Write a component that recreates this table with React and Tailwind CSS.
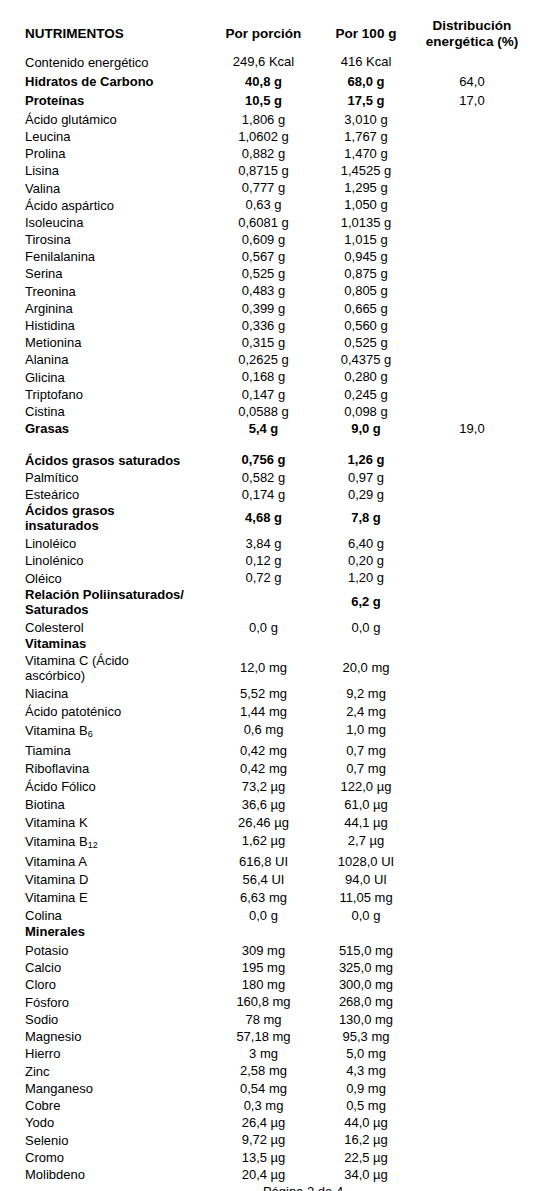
const aminos = [
  ["Ácido glutámico", "1,806 g", "3,010 g"],
  ["Leucina", "1,0602 g", "1,767 g"],
  ["Prolina", "0,882 g", "1,470 g"],
  ["Lisina", "0,8715 g", "1,4525 g"],
  ["Valina", "0,777 g", "1,295 g"],
  ["Ácido aspártico", "0,63 g", "1,050 g"],
  ["Isoleucina", "0,6081 g", "1,0135 g"],
  ["Tirosina", "0,609 g", "1,015 g"],
  ["Fenilalanina", "0,567 g", "0,945 g"],
  ["Serina", "0,525 g", "0,875 g"],
  ["Treonina", "0,483 g", "0,805 g"],
  ["Arginina", "0,399 g", "0,665 g"],
  ["Histidina", "0,336 g", "0,560 g"],
  ["Metionina", "0,315 g", "0,525 g"],
  ["Alanina", "0,2625 g", "0,4375 g"],
  ["Glicina", "0,168 g", "0,280 g"],
  ["Triptofano", "0,147 g", "0,245 g"],
  ["Cistina", "0,0588 g", "0,098 g"],
];

const minerals = [
  ["Potasio", "309 mg", "515,0 mg"],
  ["Calcio", "195 mg", "325,0 mg"],
  ["Cloro", "180 mg", "300,0 mg"],
  ["Fósforo", "160,8 mg", "268,0 mg"],
  ["Sodio", "78 mg", "130,0 mg"],
  ["Magnesio", "57,18 mg", "95,3 mg"],
  ["Hierro", "3 mg", "5,0 mg"],
  ["Zinc", "2,58 mg", "4,3 mg"],
  ["Manganeso", "0,54 mg", "0,9 mg"],
  ["Cobre", "0,3 mg", "0,5 mg"],
  ["Yodo", "26,4 µg", "44,0 µg"],
  ["Selenio", "9,72 µg", "16,2 µg"],
  ["Cromo", "13,5 µg", "22,5 µg"],
  ["Molibdeno", "20,4 µg", "34,0 µg"],
];

function Row({ label, a, b, c, bold, h = "h-[17.2px]" }) {
  return (
    <div className={`grid grid-cols-[188px_101px_104px_108px] items-center ${h} ${bold ? "font-bold" : ""}`}>
      <div className="pr-[26px] leading-[15px]">{label}</div>
      <div className="text-center">{a}</div>
      <div className="text-center">{b}</div>
      <div className="text-center font-normal">{c}</div>
    </div>
  );
}

export default function App() {
  return (
    <div className="bg-white text-black font-['Liberation_Sans',Arial,sans-serif] text-[13px] w-[551px] h-[1191px] overflow-hidden pl-[25px] pt-[16px]">
      <div className="grid grid-cols-[188px_101px_104px_108px] items-center h-[36px] font-bold text-[13.5px]">
        <div>NUTRIMENTOS</div>
        <div className="text-center">Por porción</div>
        <div className="text-center">Por 100 g</div>
        <div className="text-center leading-[15.6px]">
          Distribución
          <br />
          energética (%)
        </div>
      </div>

      <Row label="Contenido energético" a="249,6 Kcal" b="416 Kcal" h="h-[20px]" />
      <Row label="Hidratos de Carbono" a="40,8 g" b="68,0 g" c="64,0" bold h="h-[19px]" />
      <Row label="Proteínas" a="10,5 g" b="17,5 g" c="17,0" bold h="h-[18.5px]" />
      {aminos.map(([l, a, b]) => (
        <Row key={l} label={l} a={a} b={b} />
      ))}
      <Row label="Grasas" a="5,4 g" b="9,0 g" c="19,0" bold h="h-[18px]" />
      <div className="h-[13.6px]" />
      <Row label="Ácidos grasos saturados" a="0,756 g" b="1,26 g" bold />
      <Row label="Palmítico" a="0,582 g" b="0,97 g" />
      <Row label="Esteárico" a="0,174 g" b="0,29 g" />
      <Row label="Ácidos grasos insaturados" a="4,68 g" b="7,8 g" bold h="h-[32px]" />
      <Row label="Linoléico" a="3,84 g" b="6,40 g" />
      <Row label="Linolénico" a="0,12 g" b="0,20 g" />
      <Row label="Oléico" a="0,72 g" b="1,20 g" />
      <Row label="Relación Poliinsaturados/ Saturados" b="6,2 g" bold h="h-[32px]" />
      <Row label="Colesterol" a="0,0 g" b="0,0 g" />
      <Row label="Vitaminas" bold />
      <Row label="Vitamina C (Ácido ascórbico)" a="12,0 mg" b="20,0 mg" h="h-[32px]" />
      <Row label="Niacina" a="5,52 mg" b="9,2 mg" h="h-[18px]" />
      <Row label="Ácido patoténico" a="1,44 mg" b="2,4 mg" h="h-[17.7px]" />
      <Row
        label={
          <span>
            Vitamina B<sub className="text-[9px]">6</sub>
          </span>
        }
        a="0,6 mg"
        b="1,0 mg"
        h="h-[21px]"
      />
      <Row label="Tiamina" a="0,42 mg" b="0,7 mg" h="h-[18px]" />
      <Row label="Riboflavina" a="0,42 mg" b="0,7 mg" h="h-[18px]" />
      <Row label="Ácido Fólico" a="73,2 µg" b="122,0 µg" h="h-[18px]" />
      <Row label="Biotina" a="36,6 µg" b="61,0 µg" h="h-[18px]" />
      <Row label="Vitamina K" a="26,46 µg" b="44,1 µg" h="h-[18px]" />
      <Row
        label={
          <span>
            Vitamina B<sub className="text-[9px]">12</sub>
          </span>
        }
        a="1,62 µg"
        b="2,7 µg"
        h="h-[21px]"
      />
      <Row label="Vitamina A" a="616,8 UI" b="1028,0 UI" h="h-[18px]" />
      <Row label="Vitamina D" a="56,4 UI" b="94,0 UI" h="h-[18px]" />
      <Row label="Vitamina E" a="6,63 mg" b="11,05 mg" h="h-[18px]" />
      <Row label="Colina" a="0,0 g" b="0,0 g" h="h-[17.5px]" />
      <Row label="Minerales" bold h="h-[17.5px]" />
      {minerals.map(([l, a, b]) => (
        <Row key={l} label={l} a={a} b={b} h="h-[17.25px]" />
      ))}

      <div className="flex justify-center pl-[30px] pt-[1px] leading-[17px]">Página 2 de 4</div>
    </div>
  );
}
